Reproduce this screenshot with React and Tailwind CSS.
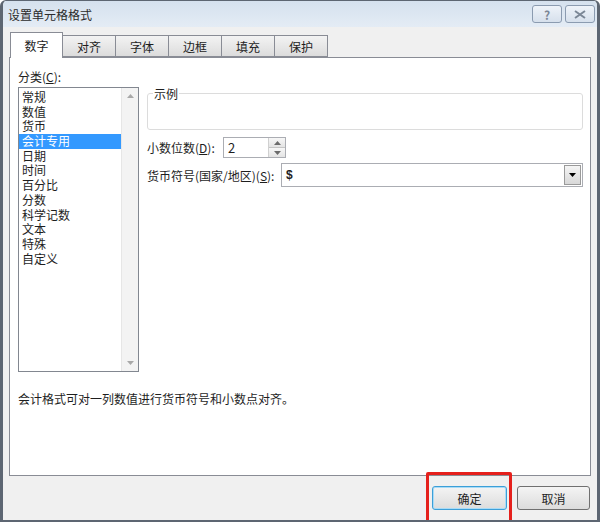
const font = { fontFamily: '"Noto Sans CJK SC", "Liberation Sans", sans-serif' };

const categories = ["常规", "数值", "货币", "会计专用", "日期", "时间", "百分比", "分数", "科学记数", "文本", "特殊", "自定义"];
const tabs = ["数字", "对齐", "字体", "边框", "填充", "保护"];

function Tri({ up, className }) {
    return (
        <svg width="7" height="4" viewBox="0 0 7 4" className={className}>
            {up ? <path d="M0 4 L3.5 0 L7 4 Z" fill="currentColor" /> : <path d="M0 0 L3.5 4 L7 0 Z" fill="currentColor" />}
        </svg>
    );
}

export default function App() {
    return (
        <div
            className="relative w-[600px] h-[522px] overflow-hidden bg-[#f0f0f0] border-x-[3px] border-b-[2px] border-t-[1px] border-[#5d6672] rounded-t-[6px] flex flex-col text-[12px] text-[#1e1e1e] leading-[15px]"
            style={font}
        >
            {/* title bar */}
            <div className="h-[26px] shrink-0 flex items-center pl-[5px] pr-[2px] bg-gradient-to-b from-[#d5e1ee] to-[#e4ecf5]">
                <span className="text-[12px] text-[#2b2b2b] mt-[1px]">设置单元格格式</span>
                <div className="ml-auto flex gap-[3px]">
                    <div className="w-[30px] h-[18px] rounded-[3px] border border-[#8b9bb0] bg-gradient-to-b from-[#eef3f9] to-[#d6e0ec] flex items-center justify-center text-[12px] text-[#7b8796] font-bold">
                        ?
                    </div>
                    <div className="w-[30px] h-[18px] rounded-[3px] border border-[#8b9bb0] bg-gradient-to-b from-[#eef3f9] to-[#d6e0ec] flex items-center justify-center">
                        <svg width="12" height="9" viewBox="0 0 12 9">
                            <path d="M1 1 L11 8 M11 1 L1 8" stroke="#7b8796" strokeWidth="2" fill="none" />
                        </svg>
                    </div>
                </div>
            </div>

            {/* body */}
            <div className="flex-1 flex flex-col px-[6px] pt-[5px]">
                {/* tabs */}
                <div className="flex items-end h-[25px] pl-[1px] relative z-10">
                    {tabs.map((t, i) =>
                        i === 0 ? (
                            <div
                                key={t}
                                className="w-[53px] h-[26px] -mb-[1px] bg-white border border-b-0 border-[#898c95] flex items-center justify-center text-[12px]"
                            >
                                {t}
                            </div>
                        ) : (
                            <div
                                key={t}
                                className="w-[53px] h-[22px] bg-gradient-to-b from-[#f3f3f3] to-[#dcdcdc] border border-l-0 border-[#898c95] flex items-center justify-center text-[12px]"
                            >
                                {t}
                            </div>
                        )
                    )}
                </div>

                {/* panel */}
                <div className="h-[419px] bg-white border border-[#898c95] flex flex-col pl-[8px] pr-[7px]">
                    <div className="flex gap-[8px]">
                        {/* category */}
                        <div className="flex flex-col">
                            <div className="mt-[11px] h-[15px]">
                                分类(<span className="underline">C</span>):
                            </div>
                            <div className="mt-[3px] w-[121px] h-[285px] border border-[#828790] flex">
                                <div className="flex-1 flex flex-col pt-[2px]">
                                    {categories.map((c, i) => (
                                        <div
                                            key={c}
                                            className={
                                                i === 3
                                                    ? "h-[14.7px] leading-[14.7px] pl-[3px] bg-[#3399ff] text-white"
                                                    : "h-[14.7px] leading-[14.7px] pl-[3px]"
                                            }
                                        >
                                            {c}
                                        </div>
                                    ))}
                                </div>
                                <div className="w-[17px] bg-[#f3f3f3] border-l border-[#e6e6e6] flex flex-col items-center justify-between py-[6px] text-[#a8a8a8]">
                                    <Tri up />
                                    <Tri />
                                </div>
                            </div>
                        </div>

                        {/* right side */}
                        <div className="flex-1 flex flex-col pt-[35px]">
                            <div className="relative h-[37px] rounded-[3px] border border-[#dcdcdc]">
                                <span className="absolute -top-[8px] left-[5px] bg-white px-[1px] text-[12px]">示例</span>
                            </div>
                            <div className="mt-[7px] flex items-center h-[21px]">
                                <span className="w-[76px]">
                                    小数位数(<span className="underline">D</span>):
                                </span>
                                <div className="w-[63px] h-[21px] border border-[#abadb3] flex">
                                    <div className="flex-1 flex items-center pl-[4px] text-[13px]">2</div>
                                    <div className="w-[17px] flex flex-col border-l border-[#d0d0d0]">
                                        <div className="flex-1 bg-gradient-to-b from-[#f7f7f7] to-[#e4e4e4] border-b border-[#c5c5c5] flex items-center justify-center text-[#6b6b6b]">
                                            <Tri up />
                                        </div>
                                        <div className="flex-1 bg-gradient-to-b from-[#f7f7f7] to-[#e4e4e4] flex items-center justify-center text-[#6b6b6b]">
                                            <Tri />
                                        </div>
                                    </div>
                                </div>
                            </div>
                            <div className="mt-[5px] flex items-center h-[24px]">
                                <span className="w-[134px]">
                                    货币符号(国家/地区)(<span className="underline">S</span>):
                                </span>
                                <div className="flex-1 h-[24px] border border-[#abadb3] flex items-center">
                                    <span className="flex-1 pl-[4px] font-bold text-[12px]" style={{ fontFamily: '"Liberation Sans", sans-serif' }}>
                                        $
                                    </span>
                                    <div className="w-[17px] h-[20px] mr-[1px] border border-[#9a9a9a] bg-gradient-to-b from-[#f5f5f5] to-[#d8d8d8] flex items-center justify-center text-black">
                                        <Tri />
                                    </div>
                                </div>
                            </div>
                        </div>
                    </div>

                    <div className="mt-[19px]">会计格式可对一列数值进行货币符号和小数点对齐。</div>
                </div>

                {/* buttons */}
                <div className="flex justify-end gap-[10px] mt-[10px] pr-[1px]">
                    <div className="w-[75px] h-[24px] rounded-[3px] border border-[#3c9fd8] bg-gradient-to-b from-[#f4f4f4] to-[#dcdcdc] flex items-center justify-center shadow-[inset_0_0_0_1px_#a9dbf6]">
                        确定
                    </div>
                    <div className="w-[73px] h-[24px] rounded-[3px] border border-[#707070] bg-gradient-to-b from-[#f4f4f4] to-[#dcdcdc] flex items-center justify-center">
                        取消
                    </div>
                </div>
            </div>

            {/* annotation */}
            <div className="absolute left-[423px] top-[471px] w-[86px] h-[52px] border-[3px] border-[#e5201c] rounded-[2px]" />
        </div>
    );
}
